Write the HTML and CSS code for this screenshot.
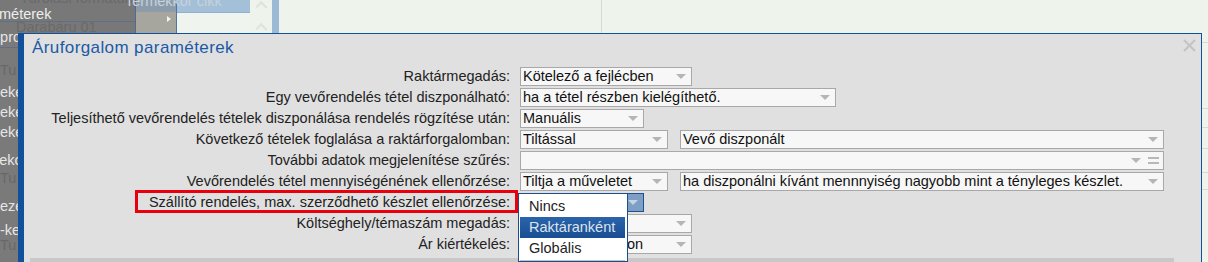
FILE: index.html
```html
<!DOCTYPE html>
<html lang="hu">
<head>
    <meta charset="UTF-8">
    <title>Áruforgalom paraméterek</title>
    <link rel="stylesheet" href="styles.css">
</head>
<body>
    <div class="app">
        <div class="topbar">
            <div class="tb-dark">
                <div class="ghost tb-ghost-top">Tárolási formátum</div>
                <div class="menu-item tb-menu">paraméterek</div>
                <div class="ghost tb-ghost-row">Darabáru 01</div>
                <span class="head-text">Termékkör cikk</span>
            </div>
            <div class="tb-col">
                <div class="tb-col-head"></div>
                <div class="tb-col-body"><span class="caret"></span></div>
            </div>
            <div class="tb-blue">
                <div class="tb-blue-head"></div>
                <div class="tb-blue-body"></div>
            </div>
            <div class="tb-scroll">
                <span class="chev"></span>
                <span class="chev"></span>
            </div>
            <div class="tb-bar"></div>
            <div class="tb-rest"><div class="tb-split"></div></div>
        </div>
        <div class="lower">
            <div class="side">
                <div class="side-ghost">
                    <div class="gl gl-1">Tu</div>
                    <div class="gl gl-2">Tu</div>
                    <div class="gl gl-3">Tu</div>
                </div>
                <div class="side-menu">
                    <div class="ml ml-pro">ppro</div>
                    <div class="ml ml-a">eké</div>
                    <div class="ml ml-b">eké</div>
                    <div class="ml ml-b">eké</div>
                    <div class="ml ml-c">lekc</div>
                    <div class="ml ml-d">eze</div>
                    <div class="ml ml-e">-ke</div>
                </div>
            </div>
            <div class="grid-rows">
                <div class="gr gr-1"></div>
                <div class="gr gr-2"></div>
                <div class="gr gr-3"></div>
                <div class="gr gr-4"></div>
                <div class="gr gr-5"></div>
                <div class="gr gr-6"></div>
            </div>
        </div>
    </div>

    <div class="dialog">
        <div class="dlg-title">Áruforgalom paraméterek</div>
        <svg class="dlg-close" width="13" height="13" viewBox="0 0 13 13">
            <path d="M1 1 L12 12 M12 1 L1 12" stroke="#c3c3c3" stroke-width="2" fill="none"/>
        </svg>

        <div class="form">
            <div class="lbl">Raktármegadás:</div>
            <div class="ctl">
                <div class="select w-l"><span class="val">Kötelező a fejlécben</span><span class="arrow"></span></div>
            </div>

            <div class="lbl">Egy vevőrendelés tétel diszponálható:</div>
            <div class="ctl">
                <div class="select w-xl"><span class="val">ha a tétel részben kielégíthető.</span><span class="arrow"></span></div>
            </div>

            <div class="lbl">Teljesíthető vevőrendelés tételek diszponálása rendelés rögzítése után:</div>
            <div class="ctl">
                <div class="select w-s"><span class="val">Manuális</span><span class="arrow"></span></div>
            </div>

            <div class="lbl">Következő tételek foglalása a raktárforgalomban:</div>
            <div class="ctl">
                <div class="select w-m"><span class="val">Tiltással</span><span class="arrow"></span></div>
                <div class="select w-wide"><span class="val">Vevő diszponált</span><span class="arrow"></span></div>
            </div>

            <div class="lbl">További adatok megjelenítése szűrés:</div>
            <div class="ctl">
                <div class="select w-full"><span class="val"></span><span class="arrow"></span><span class="eq"></span></div>
            </div>

            <div class="lbl">Vevőrendelés tétel mennyiségénének ellenőrzése:</div>
            <div class="ctl">
                <div class="select w-m"><span class="val">Tiltja a műveletet</span><span class="arrow"></span></div>
                <div class="select w-wide"><span class="val">ha diszponálni kívánt mennnyiség nagyobb mint a tényleges készlet.</span><span class="arrow"></span></div>
            </div>

            <div class="lbl"><span class="mark">Szállító rendelés, max. szerződhető készlet ellenőrzése:</span></div>
            <div class="ctl">
                <div class="select w-s focus"><span class="val">Raktáranként</span><span class="arrow"></span></div>
                <ul class="list">
                    <li>Nincs</li>
                    <li class="on">Raktáranként</li>
                    <li>Globális</li>
                    <li class="sep"></li>
                </ul>
            </div>

            <div class="lbl">Költséghely/témaszám megadás:</div>
            <div class="ctl">
                <div class="select w-l"><span class="val">Nincs</span><span class="arrow"></span></div>
            </div>

            <div class="lbl">Ár kiértékelés:</div>
            <div class="ctl">
                <div class="select w-l"><span class="val">Nyilvántartási áron</span><span class="arrow"></span></div>
            </div>
        </div>

        <div class="dlg-foot"></div>
    </div>
</body>
</html>
```

FILE: styles.css
```css
body {
    margin: 0;
    width: 1208px;
    height: 262px;
    overflow: hidden;
    position: relative;
    background-color: #eef3ec;
    font-family: "Liberation Sans", Arial, sans-serif;
    font-size: 14.5px;
}

/* background application (behind the dialog) */

.app {
    display: flex;
    flex-direction: column;
    height: 262px;
}

.topbar {
    display: flex;
    height: 33px;
}

.tb-dark {
    width: 136px;
    background-color: #787878;
    border-right: 1px solid #4f6c90;
    box-sizing: border-box;
    position: relative;
    white-space: nowrap;
    line-height: 14px;
}

.ghost {
    color: #6a6a6a;
}

.tb-ghost-top {
    margin-top: -9px;
    padding-left: 20px;
}

.tb-menu {
    color: #eeeeee;
    margin-left: -30px;
    height: 14px;
    padding-top: 2px;
    border-bottom: 1px solid #5d7088;
}

.tb-ghost-row {
    padding-left: 16px;
    margin-top: -2px;
}

.head-text {
    position: absolute;
    left: 125px;
    top: -6px;
    color: #c6d2dc;
}

.tb-col {
    width: 40px;
    display: flex;
    flex-direction: column;
    border-right: 1px solid #4f76a6;
}

.tb-col-head {
    height: 12px;
    background-color: #8c9cab;
}

.tb-col-body {
    flex: 1;
    background-color: #a6a69e;
    display: flex;
    justify-content: flex-end;
    padding: 4px 5px 0 0;
}

.caret {
    width: 0;
    height: 0;
    border-top: 3px solid transparent;
    border-bottom: 3px solid transparent;
    border-left: 4px solid #f4f4f4;
}

.tb-blue {
    width: 73px;
    display: flex;
    flex-direction: column;
}

.tb-blue-head {
    height: 12px;
    background-color: #a4c0d8;
    border-bottom: 1px solid #8fb0cf;
}

.tb-blue-body {
    flex: 1;
    background-color: #f0f4ef;
}

.tb-scroll {
    width: 22px;
    display: flex;
    flex-direction: column;
    align-items: center;
    gap: 12px;
    padding-top: 1px;
}

.chev {
    width: 7px;
    height: 7px;
    border-left: 2px solid #dde3dc;
    border-top: 2px solid #dde3dc;
    transform: rotate(45deg);
    margin-top: 2px;
}

.tb-bar {
    width: 7px;
    background-color: #9cb9d6;
}

.tb-rest {
    flex: 1;
    padding-left: 322px;
}

.tb-split {
    height: 33px;
    border-left: 1px solid #d5dbd3;
}

.lower {
    flex: 1;
    display: flex;
}

.side {
    width: 136px;
    background-color: #7a7a7a;
    display: grid;
    overflow: hidden;
    white-space: nowrap;
}

.side-ghost,
.side-menu {
    grid-area: 1 / 1;
}

.gl {
    color: #686868;
    height: 20px;
    line-height: 20px;
}

.gl-1 {
    margin-top: 27px;
}

.gl-2 {
    margin-top: 88px;
}

.gl-3 {
    margin-top: 47px;
}

.ml {
    color: #e6e6e6;
    height: 20px;
    line-height: 20px;
}

.ml-pro {
    margin-top: -6px;
    margin-left: -8px;
    border-bottom: 1px solid #5d7088;
}

.ml-a {
    margin-top: 34px;
}

.ml-c {
    margin-top: 8px;
    margin-left: -4px;
}

.ml-d {
    margin-top: 26px;
}

.ml-e {
    margin-top: 4px;
}

.grid-rows {
    flex: 1;
}

.gr {
    border-bottom: 1px solid #d6dcd4;
}

.gr-1 { height: 9px; }
.gr-2 { height: 65px; }
.gr-3 { height: 18px; }
.gr-4 { height: 20px; }
.gr-5 { height: 23px; }
.gr-6 { height: 16px; }

/* dialog */

.dialog {
    position: absolute;
    left: 18px;
    top: 33px;
    width: 1184px;
    height: 240px;
    box-sizing: border-box;
    background-color: #e0e0e0;
    border-top: 1px solid #11509b;
    border-left: 6px solid #11509b;
    border-right: 1px solid #11509b;
}

.dlg-title {
    padding: 4px 0 0 8px;
    font-size: 17px;
    letter-spacing: 0.4px;
    line-height: 20px;
    color: #1b5aa6;
}

.dlg-close {
    position: absolute;
    top: 5px;
    right: 5px;
}

.form {
    margin-top: 9px;
    display: grid;
    grid-template-columns: 486px auto;
    column-gap: 10px;
    row-gap: 2px;
}

.lbl {
    text-align: right;
    line-height: 19px;
    color: #222222;
    white-space: nowrap;
}

.mark {
    display: inline-block;
    position: relative;
}

.mark::after {
    content: "";
    position: absolute;
    left: -14px;
    right: -8px;
    top: -3px;
    bottom: -1px;
    border: 3px solid #e8000d;
}

.ctl {
    display: flex;
    gap: 12px;
    position: relative;
}

.select {
    height: 19px;
    box-sizing: border-box;
    border: 1px solid #a8a8a8;
    background-color: #f7f7f7;
    display: flex;
    align-items: center;
    padding: 0 5px 0 2px;
    color: #111111;
    line-height: 17px;
    white-space: nowrap;
    overflow: hidden;
}

.select .val {
    flex: 1;
    overflow: hidden;
}

.arrow {
    width: 0;
    height: 0;
    border-left: 5px solid transparent;
    border-right: 5px solid transparent;
    border-top: 5px solid #b5b5b5;
}

.eq {
    width: 11px;
    height: 3px;
    border-top: 2px solid #b8b8b8;
    border-bottom: 2px solid #b8b8b8;
    margin-left: 7px;
    margin-right: -1px;
}

.select.focus {
    border-color: #1f4f8c;
    background-color: #7d9ec5;
}

.select.focus .arrow {
    border-top-color: #c5d4e4;
}

.w-s { width: 124px; }
.w-m { width: 148px; }
.w-l { width: 172px; }
.w-xl { width: 316px; }
.w-wide { width: 484px; }
.w-full { width: 644px; }

/* open drop-down list */

.list {
    position: absolute;
    z-index: 5;
    left: -2px;
    top: 0;
    width: 110px;
    margin: 0;
    padding: 2px 0 0;
    list-style: none;
    background-color: #ffffff;
    border: 1px solid #1d4e8c;
    box-sizing: border-box;
}

.list li {
    height: 21px;
    line-height: 21px;
    padding-left: 9px;
    margin: 0 2px 0 1px;
    color: #222222;
}

.list li.on {
    background: linear-gradient(#2a64ab, #1a4e92);
    color: #dce4ee;
}

.list li.sep {
    height: 1px;
    margin-top: 1px;
    background-color: #c4c4c4;
}

.dlg-foot {
    margin: 4px 0 0 6px;
    width: 1144px;
    height: 10px;
    background-color: #c8c8c8;
}
```
